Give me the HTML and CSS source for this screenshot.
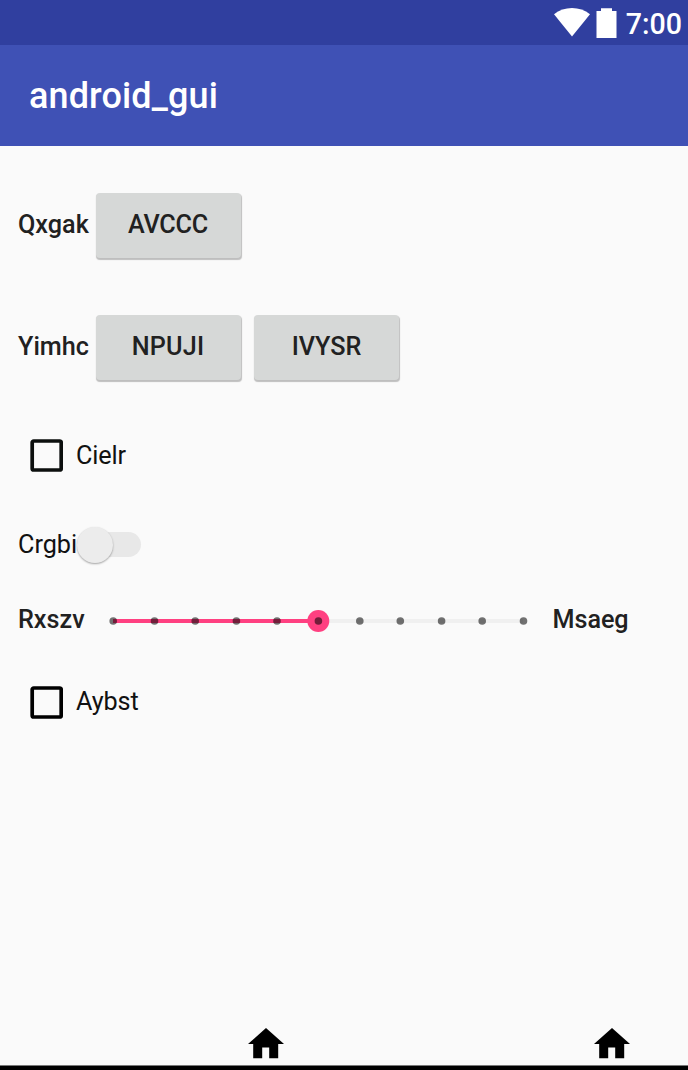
FILE: index.html
```
<!DOCTYPE html>
<html lang="en">
<head>
<meta charset="utf-8">
<title>android_gui</title>
<link rel="stylesheet" href="styles.css">
</head>
<body>
<div class="screen">
  <header class="status-bar">
    <svg class="wifi" viewBox="0 0 36 29"><path d="M0 6.2C10-2 26-2 36 6.2L18 28.4z"/></svg>
    <svg class="battery" viewBox="0 0 21 31"><path d="M5 0.3h11V3h4.5v27H.5V3H5z"/></svg>
    <span class="clock">7:00</span>
  </header>
  <div class="app-bar"><h1 class="title">android_gui</h1></div>
  <main class="content">
    <div class="row row-button"><span class="label">Qxgak</span><button class="button button-avccc">AVCCC</button></div>
    <div class="row row-button"><span class="label">Yimhc</span><button class="button button-npuji">NPUJI</button><button class="button">IVYSR</button></div>
    <label class="row row-check"><svg class="checkbox checkbox-soft" viewBox="0 0 33 33"><rect x="2.2" y="2" width="29" height="29" rx="1.5"/></svg><span class="text">Cielr</span></label>
    <div class="row row-switch"><span class="text switch-text">Crgbi</span><span class="switch"><span class="thumb"></span></span></div>
    <div class="row row-slider">
      <span class="label label-start">Rxszv</span>
      <svg class="slider" viewBox="0 0 420 24">
        <path class="track" d="M5 12h410"/>
        <path class="progress" d="M5 12h205"/>
        <circle class="knob" cx="210.3" cy="12" r="11"/>
        <g class="ticks"><circle cx="5.2" cy="12" r="3.8"/><circle cx="46.5" cy="12" r="3.8"/><circle cx="87.2" cy="12" r="3.8"/><circle cx="128.4" cy="12" r="3.8"/><circle cx="169" cy="12" r="3.8"/><circle cx="210.4" cy="12" r="3.8"/><circle cx="251.8" cy="12" r="3.8"/><circle cx="292.3" cy="12" r="3.8"/><circle cx="333.6" cy="12" r="3.8"/><circle cx="374.2" cy="12" r="3.8"/><circle cx="415.5" cy="12" r="3.8"/></g>
      </svg>
      <span class="label label-end">Msaeg</span>
    </div>
    <label class="row row-check-last"><svg class="checkbox" viewBox="0 0 33 33"><rect x="2.2" y="2" width="29" height="29" rx="1.5"/></svg><span class="text">Aybst</span></label>
  </main>
  <nav class="bottom-bar">
    <svg class="home" viewBox="0 0 36 31"><path d="M18 0L0 16h5.2v14.3h9V19.4h7v10.9h9V16H36z"/></svg>
    <svg class="home" viewBox="0 0 36 31"><path d="M18 0L0 16h5.2v14.3h9V19.4h7v10.9h9V16H36z"/></svg>
  </nav>
</div>
</body>
</html>
```
FILE: styles.css
```
* { box-sizing: border-box; }
body { margin: 0; background: #fafafa; font-family: Roboto, sans-serif; }
.screen { width: 688px; height: 1070px; display: flex; flex-direction: column; overflow: hidden; background: linear-gradient(#fafafa 1065px, #777 1065px, #777 1066px, #000 1066px); }
.status-bar { height: 45px; flex: none; background: #303f9f; display: flex; justify-content: flex-end; align-items: flex-start; padding: 8px 6px 0 0; color: #fff; }
.wifi { width: 36px; height: 29px; fill: #fff; margin-right: 6px; }
.battery { width: 21px; height: 31px; fill: #fff; margin-right: 9px; }
.clock { font-size: 28.6px; line-height: 33px; font-weight: 500; }
.app-bar { height: 101px; flex: none; background: #3f51b5; padding: 0 29px; display: flex; align-items: center; }
.title { margin: 0; color: #fff; font-size: 36px; line-height: 42px; font-weight: 500; letter-spacing: .12px; }
.content { flex: 1; display: flex; flex-direction: column; padding: 46px 18px 0; }
.row { display: flex; align-items: center; flex: none; }
.label, .text { font-size: 25.2px; line-height: 30px; white-space: nowrap; }
.label { font-weight: 500; color: #212121; }
.text { color: #111; }
.row-button { height: 66px; margin-bottom: 56px; }
.row-button .label { width: 77.5px; padding-bottom: 0; }
.button { width: 145px; height: 65px; margin: 0 13.5px 0 0; padding: 0; border: 0; border-radius: 4px; background: #d6d8d7; box-shadow: .5px 1.5px 1px rgba(0,0,0,.24); color: #212121; font: 500 25.2px/30px Roboto, sans-serif; }
.button-avccc { letter-spacing: -.2px; }
.button-npuji { letter-spacing: .2px; }
.row-check { height: 34px; padding-left: 12px; margin-top: 2px; }
.row-check .text { padding-top: 1px; letter-spacing: -.1px; }
.checkbox { width: 33px; height: 33px; margin-right: 13px; fill: none; stroke: #000; stroke-width: 3.7; }
.checkbox-soft { stroke: #0c0f0e; }
.row-switch { height: 40px; margin-top: 52.5px; }
.switch-text { width: 61px; }
.switch { width: 62px; height: 25px; border-radius: 13px; background: #e8e8e8; display: flex; align-items: center; }
.thumb { width: 36px; height: 36px; flex: none; border-radius: 50%; margin-left: -2.5px; background: #ececec; box-shadow: 0 1px 2px rgba(0,0,0,.35); }
.row-slider { height: 30px; margin-top: 41px; }
.row-slider .label { padding-bottom: 2px; }
.label-start { width: 90px; }
.label-end { letter-spacing: -.05px; }
.slider { width: 420px; height: 24px; margin-right: 24.5px; }
.track, .progress { fill: none; stroke-width: 4; }
.track { stroke: #f0f0f0; }
.progress { stroke: #ff4081; }
.knob { fill: #ff4081; }
.ticks { fill: #000; fill-opacity: .55; }
.row-check-last { height: 34px; padding-left: 12px; margin-top: 49.5px; }
.row-check-last .text { letter-spacing: -.1px; }
.bottom-bar { display: flex; height: 42px; flex: none; padding-left: 248px; gap: 310px; }
.home { width: 36px; height: 31px; flex: none; fill: #000; }
```
